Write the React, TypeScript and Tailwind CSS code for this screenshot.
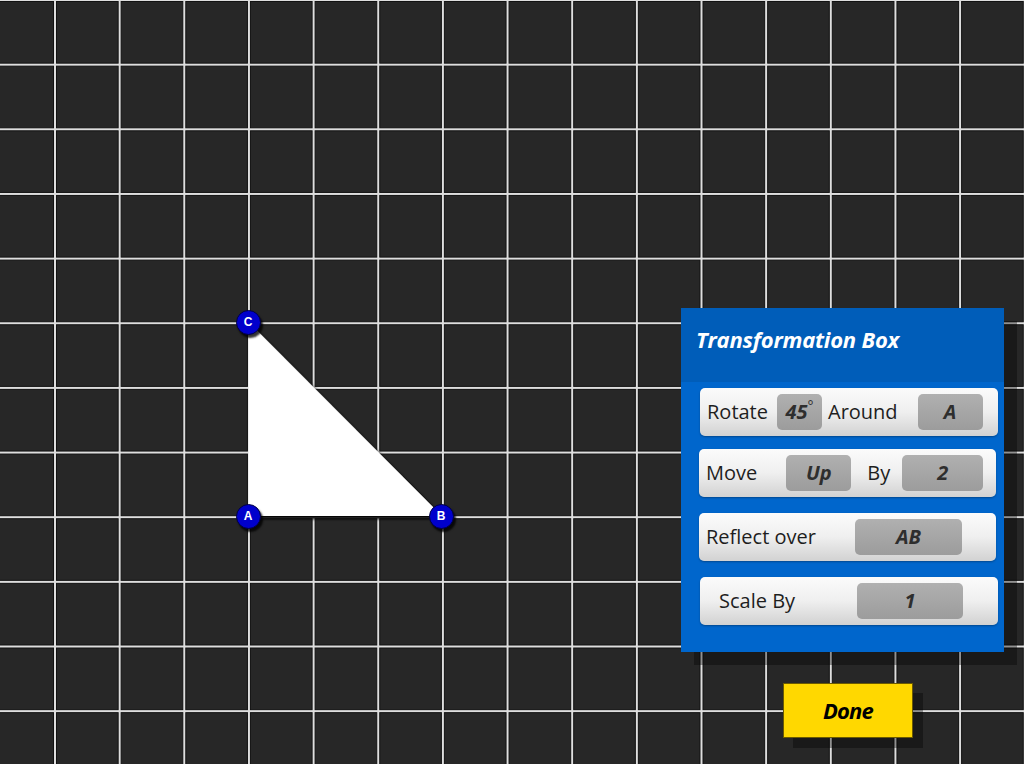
import React from "react";

const P = 64.65;

function Grid() {
  const cols = Array.from({ length: 17 }, (_, i) => -9.65 + P * i);
  const rows = Array.from({ length: 13 }, (_, j) => P * j);
  const cells: React.ReactElement[] = [];
  cols.forEach((x, i) =>
    rows.forEach((y, j) => {
      cells.push(
        <rect
          key={`${i}-${j}`}
          x={x + 1.5}
          y={y + 1.5}
          width={P - 3}
          height={P - 3}
          fill="#272727"
          stroke="#121212"
          strokeWidth={1}
        />
      );
    })
  );
  return (
    <svg className="absolute inset-0" width={1024} height={764}>
      <rect x={0} y={0} width={1024} height={764} fill="#dedede" />
      {cells}
    </svg>
  );
}

function Node({ x, y, label }: { x: number; y: number; label: string }) {
  return (
    <div
      className="absolute flex h-[25px] w-[25px] items-center justify-center rounded-full border border-[#000044] bg-[#0000cc] text-[12px] font-bold text-white shadow-[2px_3px_2px_rgba(0,0,0,0.8)]"
      style={{ left: x - 12.5, top: y - 12.5, fontFamily: '"Liberation Sans", Arial, sans-serif' }}
    >
      {label}
    </div>
  );
}

const valueBox =
  "flex h-[36px] items-center justify-center rounded-[5px] bg-gradient-to-b from-[#b0b0b0] to-[#9c9c9c] text-[20px] font-bold italic text-[#2e2e2e]";

const row =
  "flex h-[48px] items-center rounded-[5px] bg-gradient-to-b from-[#fbfbfb] via-[#efefef] to-[#d2d2d2] text-[20px] text-[#1e1e1e] shadow-[0_1px_2px_rgba(0,0,0,0.3)]";

export default function App() {
  return (
    <div
      className="relative h-[764px] w-[1024px] overflow-hidden bg-[#272727]"
      style={{ fontFamily: '"Open Sans", "Noto Sans", sans-serif' }}
    >
      <Grid />
      <svg className="absolute inset-0" width={1024} height={764}>
        <defs>
          <filter id="sh" x="-20%" y="-20%" width="140%" height="140%">
            <feDropShadow dx="3" dy="3" stdDeviation="1.5" floodColor="#000" floodOpacity="1" />
          </filter>
        </defs>
        <polygon points="248.5,322 248.5,516 442,516" fill="#ffffff" filter="url(#sh)" />
      </svg>
      <Node x={248} y={322} label="C" />
      <Node x={248} y={516} label="A" />
      <Node x={441} y={516} label="B" />

      <div className="absolute left-[681px] top-[308px] flex h-[344px] w-[323px] flex-col bg-[#0066cc] shadow-[13px_13px_0_rgba(0,0,0,0.35)]">
        <div className="flex h-[74px] items-center bg-[#005db9] pb-[12px] pl-[15px] text-[22px] font-bold italic tracking-[-0.2px] text-white">
          Transformation Box
        </div>
        <div className="flex flex-col pl-[19px] pr-[6px]">
          <div className={`${row} mt-[6px] w-[298px]`}>
            <span className="ml-[7px]">Rotate</span>
            <div className={`${valueBox} ml-[9px] w-[45px]`}>
              45<span className="-mt-[14px] text-[14px] font-normal not-italic">°</span>
            </div>
            <span className="ml-[6px]">Around</span>
            <div className={`${valueBox} ml-[20px] w-[65px]`}>A</div>
          </div>
          <div className={`${row} mt-[13px] w-[297px] -ml-[1px]`}>
            <span className="ml-[7px]">Move</span>
            <div className={`${valueBox} ml-[29px] w-[65px]`}>Up</div>
            <span className="ml-[16px]">By</span>
            <div className={`${valueBox} ml-[12px] w-[81px]`}>2</div>
          </div>
          <div className={`${row} mt-[16px] w-[297px] -ml-[1px]`}>
            <span className="ml-[7px]">Reflect over</span>
            <div className={`${valueBox} ml-[39px] w-[107px]`}>AB</div>
          </div>
          <div className={`${row} mt-[16px] w-[298px]`}>
            <span className="ml-[19px]">Scale By</span>
            <div className={`${valueBox} ml-[62px] w-[106px]`}>1</div>
          </div>
        </div>
      </div>

      <div className="absolute left-[783px] top-[683px] flex h-[55px] w-[130px] items-center justify-center border border-[#6b5a00] bg-[#ffd800] text-[22px] font-bold italic tracking-[-0.8px] text-black shadow-[10px_10px_0_rgba(0,0,0,0.35)]">
        Done
      </div>
    </div>
  );
}
